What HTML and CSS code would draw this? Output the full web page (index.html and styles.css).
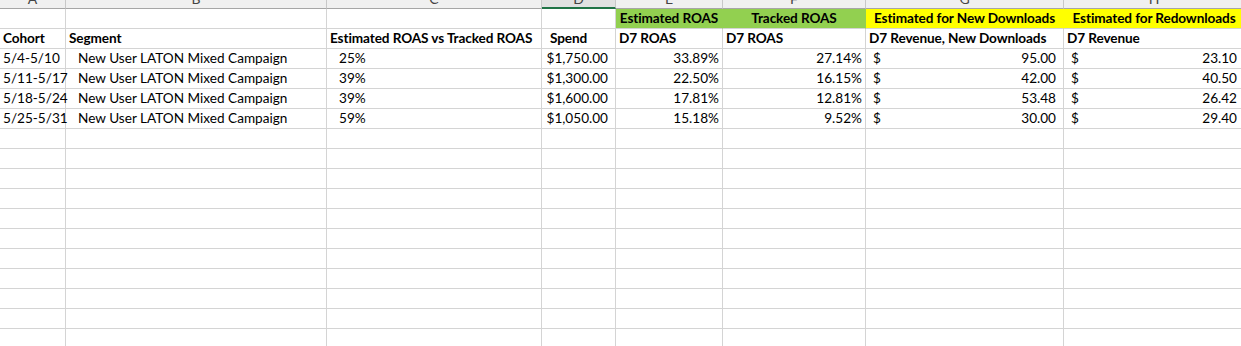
FILE: index.html
```html
<!DOCTYPE html>
<html lang="en">
<head>
<meta charset="utf-8">
<title>ROAS sheet</title>
<link rel="stylesheet" href="styles.css">
</head>
<body>
<div class="sheet">
  <div class="colhead"><span>A</span></div>
  <div class="colhead"><span>B</span></div>
  <div class="colhead"><span>C</span></div>
  <div class="colhead sel"><span>D</span></div>
  <div class="colhead"><span>E</span></div>
  <div class="colhead"><span>F</span></div>
  <div class="colhead"><span>G</span></div>
  <div class="colhead"><span>H</span></div>

  <div class="c"></div><div class="c"></div><div class="c"></div><div class="c"></div>
  <div class="c b center green">Estimated ROAS</div>
  <div class="c b center green">Tracked ROAS</div>
  <div class="c b center yellow">Estimated for New Downloads</div>
  <div class="c b center yellow">Estimated for Redownloads</div>

  <div class="c b">Cohort</div>
  <div class="c b">Segment</div>
  <div class="c b">Estimated ROAS vs Tracked ROAS</div>
  <div class="c b indent-s">Spend</div>
  <div class="c b">D7 ROAS</div>
  <div class="c b">D7 ROAS</div>
  <div class="c b">D7 Revenue, New Downloads</div>
  <div class="c b">D7 Revenue</div>

  <div class="c">5/4-5/10</div>
  <div class="c indent">New User LATON Mixed Campaign</div>
  <div class="c indent">25%</div>
  <div class="c num cur">$1,750.00</div>
  <div class="c num">33.89%</div>
  <div class="c num">27.14%</div>
  <div class="c acct"><span>$</span><span>95.00</span></div>
  <div class="c acct"><span>$</span><span>23.10</span></div>

  <div class="c">5/11-5/17</div>
  <div class="c indent">New User LATON Mixed Campaign</div>
  <div class="c indent">39%</div>
  <div class="c num cur">$1,300.00</div>
  <div class="c num">22.50%</div>
  <div class="c num">16.15%</div>
  <div class="c acct"><span>$</span><span>42.00</span></div>
  <div class="c acct"><span>$</span><span>40.50</span></div>

  <div class="c">5/18-5/24</div>
  <div class="c indent">New User LATON Mixed Campaign</div>
  <div class="c indent">39%</div>
  <div class="c num cur">$1,600.00</div>
  <div class="c num">17.81%</div>
  <div class="c num">12.81%</div>
  <div class="c acct"><span>$</span><span>53.48</span></div>
  <div class="c acct"><span>$</span><span>26.42</span></div>

  <div class="c">5/25-5/31</div>
  <div class="c indent">New User LATON Mixed Campaign</div>
  <div class="c indent">59%</div>
  <div class="c num cur">$1,050.00</div>
  <div class="c num">15.18%</div>
  <div class="c num">9.52%</div>
  <div class="c acct"><span>$</span><span>30.00</span></div>
  <div class="c acct"><span>$</span><span>29.40</span></div>

  <div class="c"></div><div class="c"></div><div class="c"></div><div class="c"></div><div class="c"></div><div class="c"></div><div class="c"></div><div class="c"></div>
  <div class="c"></div><div class="c"></div><div class="c"></div><div class="c"></div><div class="c"></div><div class="c"></div><div class="c"></div><div class="c"></div>
  <div class="c"></div><div class="c"></div><div class="c"></div><div class="c"></div><div class="c"></div><div class="c"></div><div class="c"></div><div class="c"></div>
  <div class="c"></div><div class="c"></div><div class="c"></div><div class="c"></div><div class="c"></div><div class="c"></div><div class="c"></div><div class="c"></div>
  <div class="c"></div><div class="c"></div><div class="c"></div><div class="c"></div><div class="c"></div><div class="c"></div><div class="c"></div><div class="c"></div>
  <div class="c"></div><div class="c"></div><div class="c"></div><div class="c"></div><div class="c"></div><div class="c"></div><div class="c"></div><div class="c"></div>
  <div class="c"></div><div class="c"></div><div class="c"></div><div class="c"></div><div class="c"></div><div class="c"></div><div class="c"></div><div class="c"></div>
  <div class="c"></div><div class="c"></div><div class="c"></div><div class="c"></div><div class="c"></div><div class="c"></div><div class="c"></div><div class="c"></div>
  <div class="c"></div><div class="c"></div><div class="c"></div><div class="c"></div><div class="c"></div><div class="c"></div><div class="c"></div><div class="c"></div>
  <div class="c"></div><div class="c"></div><div class="c"></div><div class="c"></div><div class="c"></div><div class="c"></div><div class="c"></div><div class="c"></div>
  <div class="c"></div><div class="c"></div><div class="c"></div><div class="c"></div><div class="c"></div><div class="c"></div><div class="c"></div><div class="c"></div>
</div>
</body>
</html>
```

FILE: styles.css
```css
html, body {
  margin: 0;
  padding: 0;
  background: #ffffff;
  overflow: hidden;
}

.sheet {
  display: grid;
  grid-template-columns: 66px 261px 215px 74px 107px 143px 198px 181px;
  grid-template-rows: 9px;
  grid-auto-rows: 20px;
  font-family: Lato, "Liberation Sans", sans-serif;
  font-size: 13.6px;
  color: #000000;
  width: 1245px;
}

.colhead {
  height: 9px;
  box-sizing: border-box;
  background: #f0f0f0;
  border-right: 1px solid #c8c8c8;
  border-bottom: 1px solid #a6a6a6;
  overflow: hidden;
  text-align: center;
  color: #444444;
  font-size: 14px;
  line-height: 16px;
  grid-row: 1;
}

.colhead span {
  display: block;
  margin-top: -9px;
}

.colhead.sel {
  background: #e1e1e1;
  border-bottom: 2px solid #217346;
}

.c {
  box-sizing: border-box;
  height: 20px;
  border-right: 1px solid #d4d4d4;
  border-bottom: 1px solid #d4d4d4;
  line-height: 19px;
  padding: 0 2px 0 3px;
  white-space: nowrap;
}

.b {
  font-weight: 700;
  letter-spacing: -0.1px;
}

.center {
  text-align: center;
  padding: 0;
}

.green {
  background: #92d050;
  border-right-color: #92d050;
}

.yellow {
  background: #ffff00;
  border-right-color: #ffff00;
}

.indent { padding-left: 12px; }
.indent-s { padding-left: 8px; }

.num {
  text-align: right;
  padding-right: 3px;
}

.num.cur { padding-right: 7px; }

.acct {
  display: flex;
  justify-content: space-between;
  padding: 0 7px;
}
```
